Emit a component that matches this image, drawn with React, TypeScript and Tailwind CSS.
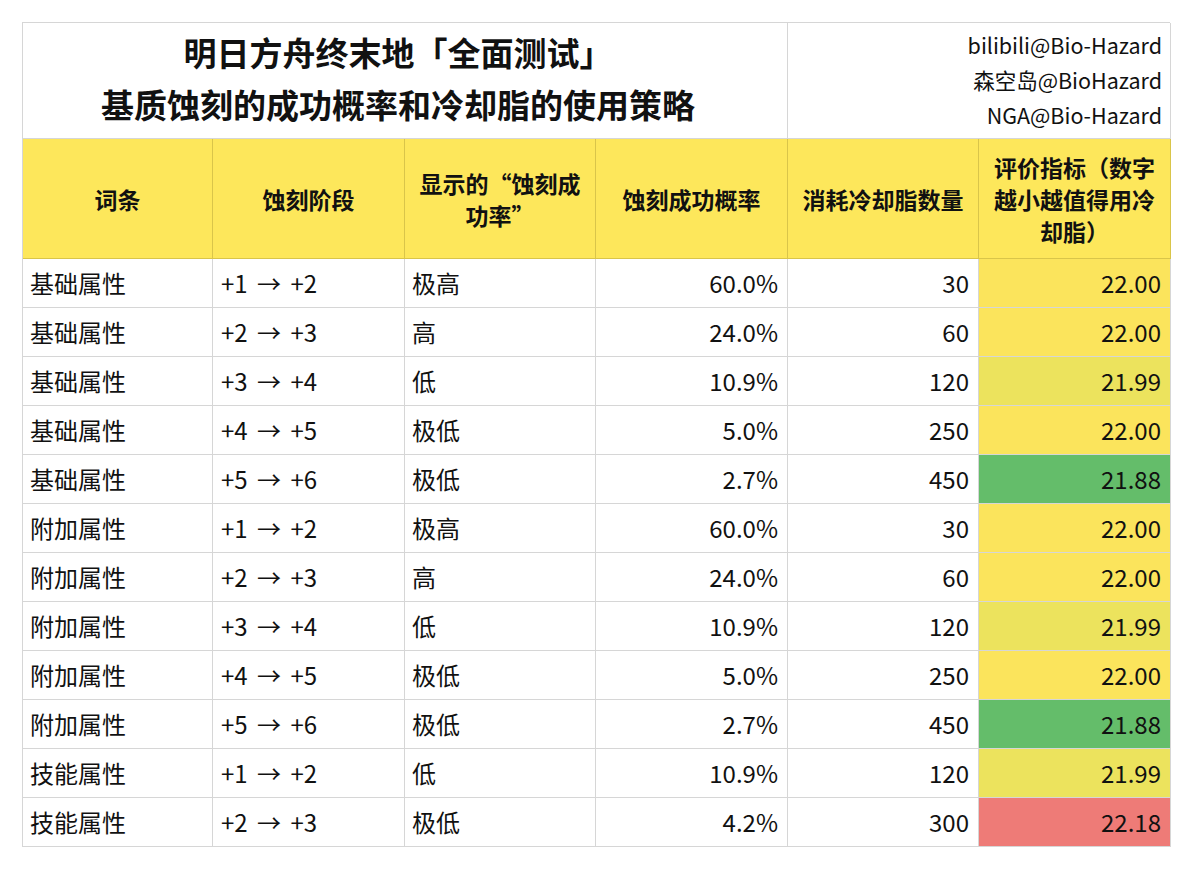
const font = { fontFamily: '"Noto Sans CJK SC", "Noto Sans", sans-serif' };

type Row = {
  term: string;
  stage: string;
  shown: string;
  rate: string;
  cost: number;
  score: string;
  tone: "yellow" | "lime" | "green" | "red";
};

const rows: Row[] = [
  { term: "基础属性", stage: "+1 → +2", shown: "极高", rate: "60.0%", cost: 30, score: "22.00", tone: "yellow" },
  { term: "基础属性", stage: "+2 → +3", shown: "高", rate: "24.0%", cost: 60, score: "22.00", tone: "yellow" },
  { term: "基础属性", stage: "+3 → +4", shown: "低", rate: "10.9%", cost: 120, score: "21.99", tone: "lime" },
  { term: "基础属性", stage: "+4 → +5", shown: "极低", rate: "5.0%", cost: 250, score: "22.00", tone: "yellow" },
  { term: "基础属性", stage: "+5 → +6", shown: "极低", rate: "2.7%", cost: 450, score: "21.88", tone: "green" },
  { term: "附加属性", stage: "+1 → +2", shown: "极高", rate: "60.0%", cost: 30, score: "22.00", tone: "yellow" },
  { term: "附加属性", stage: "+2 → +3", shown: "高", rate: "24.0%", cost: 60, score: "22.00", tone: "yellow" },
  { term: "附加属性", stage: "+3 → +4", shown: "低", rate: "10.9%", cost: 120, score: "21.99", tone: "lime" },
  { term: "附加属性", stage: "+4 → +5", shown: "极低", rate: "5.0%", cost: 250, score: "22.00", tone: "yellow" },
  { term: "附加属性", stage: "+5 → +6", shown: "极低", rate: "2.7%", cost: 450, score: "21.88", tone: "green" },
  { term: "技能属性", stage: "+1 → +2", shown: "低", rate: "10.9%", cost: 120, score: "21.99", tone: "lime" },
  { term: "技能属性", stage: "+2 → +3", shown: "极低", rate: "4.2%", cost: 300, score: "22.18", tone: "red" },
];

const toneClass = {
  yellow: "bg-[#fbe45c]",
  lime: "bg-[#ece35d]",
  green: "bg-[#64bd6a]",
  red: "bg-[#ee7b77]",
};

const headers = ["词条", "蚀刻阶段", "显示的“蚀刻成功率”", "蚀刻成功概率", "消耗冷却脂数量", "评价指标（数字越小越值得用冷却脂）"];

export default function App() {
  return (
    <div className="min-h-[871px] w-[1192px] bg-white pl-[22px] pt-[22px] text-[#111]" style={font}>
      <div className="grid w-[1148px] grid-cols-[190px_192px_191px_192px_191px_192px] border-l border-t border-[#d6d6d6]">
        <div className="col-span-4 flex h-[116px] flex-col items-center justify-center border-b border-r border-[#d6d6d6] pb-[6px] pr-[14px] text-[33px] font-bold leading-[52px]">
          <div>明日方舟终末地「全面测试」</div>
          <div>基质蚀刻的成功概率和冷却脂的使用策略</div>
        </div>
        <div className="col-span-2 flex h-[116px] flex-col items-end justify-center border-b border-r border-[#d6d6d6] pb-[2px] pr-[8px] text-[21.5px] leading-[35px]">
          <div>bilibili@Bio-Hazard</div>
          <div>森空岛@BioHazard</div>
          <div>NGA@Bio-Hazard</div>
        </div>

        {headers.map((h, i) => (
          <div
            key={h}
            className={`flex h-[120px] items-center justify-center border-b border-r border-[#d9c54a] bg-[#fde75b] text-center text-[23px] font-bold leading-[32px] ${
              i === 2 ? "px-[8px]" : i === 5 ? "px-[10px]" : "px-1"
            }`}
          >
            {h}
          </div>
        ))}

        {rows.map((r, idx) => (
          <div key={idx} className="contents">
            <div className="flex h-[49px] items-center border-b border-r border-[#d6d6d6] pl-[7px] text-[24px]">{r.term}</div>
            <div className="flex h-[49px] items-center border-b border-r border-[#d6d6d6] pl-[8px] text-[24px] [word-spacing:4px]">{r.stage}</div>
            <div className="flex h-[49px] items-center border-b border-r border-[#d6d6d6] pl-[7px] text-[24px]">{r.shown}</div>
            <div className="flex h-[49px] items-center justify-end border-b border-r border-[#d6d6d6] pr-[9px] text-[24px]">{r.rate}</div>
            <div className="flex h-[49px] items-center justify-end border-b border-r border-[#d6d6d6] pr-[9px] text-[24px]">{r.cost}</div>
            <div className={`flex h-[49px] items-center justify-end border-b border-r border-[#d6d6d6] pr-[9px] text-[24px] ${toneClass[r.tone]}`}>
              {r.score}
            </div>
          </div>
        ))}
      </div>
    </div>
  );
}
